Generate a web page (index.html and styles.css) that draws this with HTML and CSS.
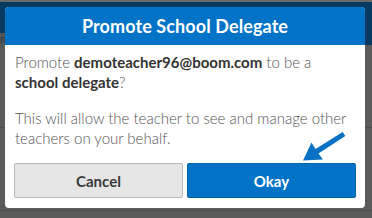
FILE: index.html
```html
<!DOCTYPE html>
<html>
<head>
<meta charset="utf-8">
<link rel="stylesheet" href="styles.css">
</head>
<body>
<div class="page">
  <div class="topline"></div>
  <div class="navbar"></div>
  <div class="subbar"><span class="subtext">m</span></div>
  <div class="content">
    <div class="row"></div>
    <div class="row"></div>
  </div>
</div>

<div class="modal">
  <div class="modal-header">Promote School Delegate</div>
  <div class="modal-body">
    <p class="msg">Promote <b>demoteacher96@boom.com</b> to be a <b>school delegate</b>?</p>
    <p class="msg">This will allow the teacher to see and manage other teachers on your behalf.</p>
  </div>
  <div class="modal-actions">
    <button class="btn btn-cancel">Cancel</button>
    <button class="btn btn-ok">Okay</button>
  </div>
</div>

<svg class="arrow" viewBox="298 126 52 38" width="52" height="38">
  <polygon fill="#0a72c4" points="342.7,131.9 345.3,136.1 318.5,153.5 323,159.5 303,160.5 311.5,142.5 315.5,149"/>
</svg>
</body>
</html>
```
FILE: styles.css
```css
html, body {
  margin: 0;
  padding: 0;
}
body {
  width: 372px;
  height: 218px;
  overflow: hidden;
  background: #5a5a5a;
  font-family: "Lato", "Open Sans", sans-serif;
  position: relative;
}
.page {
  display: flex;
  flex-direction: column;
  height: 218px;
}
.topline {
  height: 2px;
  background: #6a6a6a;
}
.navbar {
  height: 31px;
  background: #073a60;
}
.subbar {
  height: 12px;
  background: #515759;
  display: flex;
  align-items: center;
  border-right: 7px solid #073a60;
}
.subtext {
  font-size: 12px;
  line-height: 12px;
  color: #2c3a44;
  margin-left: 0;
}
.content {
  flex: 1;
  display: flex;
  flex-direction: column;
  background: #5a5a5a;
}
.row {
  height: 82px;
  border-bottom: 1px solid #4c4c4c;
}
.modal {
  position: absolute;
  left: 5px;
  top: 7px;
  width: 360px;
  height: 201px;
  background: #fff;
  border-radius: 4px;
  overflow: hidden;
  display: flex;
  flex-direction: column;
}
.modal-header {
  height: 38px;
  background: #0273c6;
  color: #fff;
  font-weight: 700;
  font-size: 18px;
  display: flex;
  align-items: center;
  justify-content: center;
  letter-spacing: 0.1px;
}
.modal-body {
  padding: 7px 10px 0 10px;
}
.msg {
  margin: 0 0 16px 0;
  font-size: 15px;
  line-height: 20px;
  color: #555;
  font-weight: 300;
}
.msg b {
  font-weight: 700;
  color: #333;
}
.modal-actions {
  display: grid;
  grid-template-columns: 1fr 1fr;
  gap: 4px;
  padding: 0 9px;
  margin-top: -1px;
}
.btn {
  height: 35px;
  font-family: inherit;
  font-size: 15px;
  font-weight: 700;
  border-radius: 2px;
  margin: 0;
  padding: 0;
}
.btn-cancel {
  background: #e6e6e6;
  border: 1px solid #b9b9b9;
  color: #3a3a3a;
}
.btn-ok {
  background: #0273c6;
  border: 1px solid #0262a6;
  color: #fff;
}
.arrow {
  position: absolute;
  left: 298px;
  top: 126px;
}
```
